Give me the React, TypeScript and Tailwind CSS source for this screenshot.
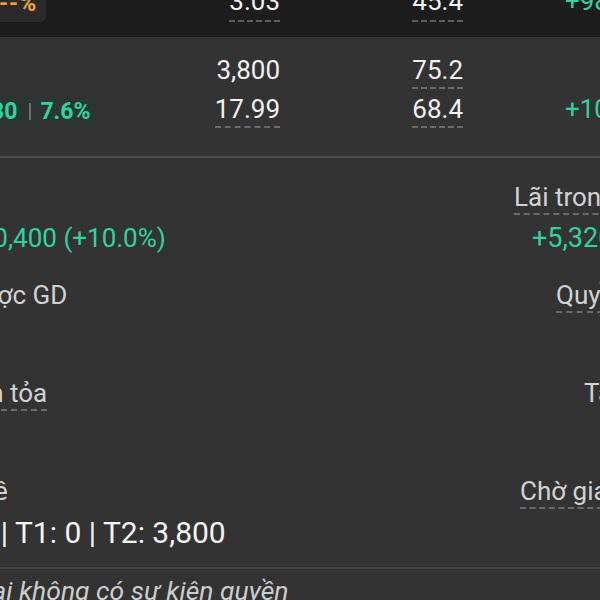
import type { ReactNode } from 'react'

const Num = ({ v, dashed, dark }: { v: string; dashed?: boolean; dark?: boolean }) => (
  <span
    className={`inline-block border-b-2 border-dashed ${
      dashed ? (dark ? 'pb-[4px] border-[#5c5c5c]' : 'pb-[2px] border-[#6b6b6b]') : 'pb-[2px] border-transparent'
    }`}
  >
    {v}
  </span>
)

const Label = ({ children, dashed, className = '' }: { children: ReactNode; dashed?: boolean; className?: string }) => (
  <div className="h-[33px]">
    <span
      className={`inline-block pb-[1px] border-b-2 border-dashed text-[#d2d2d2] ${
        dashed ? 'border-[#6b6b6b]' : 'border-transparent'
      } ${className}`}
    >
      {children}
    </span>
  </div>
)

export default function App() {
  return (
    <div className="w-[600px] h-[600px] overflow-hidden bg-[#333333] font-['Roboto',sans-serif] text-[#f0f0f0] whitespace-nowrap">
      {/* top band (previous row) */}
      <div className="h-[37px] bg-[#1d1d1d] overflow-hidden">
        <div className="-mt-[14px] flex text-[26px] leading-[30px]">
          <div className="w-[180px] shrink-0">
            <div className="inline-flex h-[36px] pt-[3px] pr-[9px] rounded-br-md bg-[#2a2a2a] text-[23px] font-bold leading-[30px] text-[#f0a532]">
              <span className="-ml-[1px] tracking-[1px]">--%</span>
            </div>
          </div>
          <div className="w-[100px] shrink-0 text-right">
            <Num v="3.03" dashed dark />
          </div>
          <div className="w-[183px] shrink-0 text-right">
            <Num v="45.4" dashed dark />
          </div>
          <div className="pl-[102px] shrink-0 text-[#2fd39e]">+98.6</div>
        </div>
      </div>

      {/* current row */}
      <div className="pt-[18px] text-[26px] leading-[30px]">
        <div className="flex">
          <div className="w-[180px] shrink-0" />
          <div className="w-[100px] shrink-0 text-right">
            <Num v="3,800" />
          </div>
          <div className="w-[183px] shrink-0 text-right">
            <Num v="75.2" dashed />
          </div>
        </div>
        <div className="mt-[5px] flex">
          <div className="w-[180px] shrink-0 flex items-start">
            <div className="mt-[2px] h-[31px] pr-[7px] inline-flex items-center rounded-r-md bg-[#2c3532] text-[23px] font-bold leading-none text-[#2fd39e]">
              <span className="-ml-[9px]">30</span>
              <span className="ml-[12px] mr-[9px] w-[2px] h-[17px] bg-[#6c7370]" />
              <span>7.6%</span>
            </div>
          </div>
          <div className="w-[100px] shrink-0 text-right">
            <Num v="17.99" dashed />
          </div>
          <div className="w-[183px] shrink-0 text-right">
            <Num v="68.4" dashed />
          </div>
          <div className="pl-[102px] shrink-0 text-[#2fd39e]">+10.5</div>
        </div>
      </div>

      <div className="mt-[28px] h-[2px] bg-[#4d4d4d]" />

      {/* details */}
      <div className="pt-[24px] flex flex-col gap-[27px] text-[26px] leading-[30px]">
        <div className="flex">
          <div className="w-[500px] shrink-0">
            <Label>&nbsp;</Label>
            <div className="mt-[8px] h-[30px] -ml-[36px] text-[#2fd39e]">+10,400 (+10.0%)</div>
          </div>
          <div className="w-[100px] shrink-0">
            <Label dashed className="ml-[14px]">Lãi trong ngày</Label>
            <div className="mt-[8px] h-[30px] ml-[32px] text-[27px] text-[#2fd39e]">+5,320</div>
          </div>
        </div>

        <div className="flex">
          <div className="w-[500px] shrink-0">
            <Label className="-ml-[36px]">Được GD</Label>
            <div className="mt-[8px] h-[30px]" />
          </div>
          <div className="w-[100px] shrink-0">
            <Label dashed className="ml-[56px]">Quyền mua</Label>
            <div className="mt-[8px] h-[30px]" />
          </div>
        </div>

        <div className="flex">
          <div className="w-[500px] shrink-0">
            <Label dashed className="-ml-[39px]">Lan tỏa</Label>
            <div className="mt-[8px] h-[30px]" />
          </div>
          <div className="w-[100px] shrink-0">
            <Label className="ml-[84px]">Tài sản</Label>
            <div className="mt-[8px] h-[30px]" />
          </div>
        </div>

        <div className="flex">
          <div className="w-[500px] shrink-0">
            <Label className="-ml-[71px]">Chờ về</Label>
            <div className="mt-[9px] h-[30px] -ml-[73px] text-[30px] text-[#f4f4f4]">T0: 0 | T1: 0 | T2: 3,800</div>
          </div>
          <div className="w-[100px] shrink-0">
            <Label dashed className="ml-[20px]">Chờ giao</Label>
            <div className="mt-[9px] h-[30px]" />
          </div>
        </div>
      </div>

      <div className="mt-[19px] h-[2px] bg-[#444444]" />
      <div className="mt-[7px] -ml-[75px] text-[26.5px] leading-[30px] italic text-[#cdcdcd]">
        Hiện tại không có sự kiện quyền
      </div>
    </div>
  )
}
